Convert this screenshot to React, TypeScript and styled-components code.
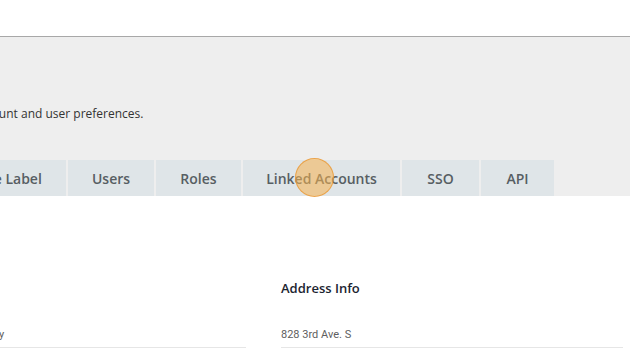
import styled, { createGlobalStyle } from "styled-components";

const GlobalStyle = createGlobalStyle`
  html, body {
    margin: 0;
    padding: 0;
    background: #ffffff;
    overflow: hidden;
  }
  body {
    font-family: "Open Sans", "DejaVu Sans", sans-serif;
    color: #333;
  }
`;

const TopBar = styled.div`
  height: 36px;
  background: #ffffff;
  border-bottom: 1px solid #a8a8a8;
`;

const Header = styled.header`
  background: #eeeeee;
  padding-top: 68px;
`;

const Inner = styled.div`
  margin-left: -96px;
`;

const Description = styled.p`
  margin: 0 0 0 -7px;
  font-size: 12px;
  line-height: 18px;
  color: #333;
`;

const TabList = styled.nav`
  display: flex;
  gap: 2px;
  margin-top: 37px;
  margin-left: 34px;
`;

const Tab = styled.div<{ $width: number }>`
  width: ${(p) => p.$width}px;
  height: 36px;
  display: flex;
  align-items: center;
  justify-content: center;
  flex-shrink: 0;
  background: #dfe5e8;
  color: #575e63;
  font-size: 14px;
  font-weight: 600;
  white-space: nowrap;
`;

const ClickMark = styled.span`
  position: absolute;
  left: 295px;
  top: 158px;
  width: 37px;
  height: 37px;
  border-radius: 50%;
  background: rgba(246, 178, 80, 0.55);
  border: 1px solid rgba(232, 150, 50, 0.75);
  pointer-events: none;
`;

const Columns = styled.section`
  display: grid;
  grid-template-columns: 342px 342px;
  column-gap: 35px;
  padding-top: 82px;
`;

const Column = styled.div`
  display: flex;
  flex-direction: column;
`;

const ColumnTitle = styled.h3`
  margin: 0;
  height: 20px;
  font-size: 13px;
  line-height: 20px;
  font-weight: 600;
  color: #1b2430;
`;

const FieldValue = styled.div`
  margin-top: 30px;
  padding-bottom: 5px;
  border-bottom: 1px solid #e6e6e6;
  font-family: Roboto, "Liberation Sans", sans-serif;
  font-size: 11px;
  line-height: 14px;
  color: #5e5e5e;
  white-space: nowrap;
`;

const tabs = [
  { label: "White Label", width: 128 },
  { label: "Users", width: 86 },
  { label: "Roles", width: 85 },
  { label: "Linked Accounts", width: 157 },
  { label: "SSO", width: 77 },
  { label: "API", width: 73 },
];

export default function App() {
  return (
    <>
      <GlobalStyle />
      <TopBar />
      <Header>
        <Inner>
          <Description>Manage your account and user preferences.</Description>
          <TabList>
            {tabs.map((t) => (
              <Tab key={t.label} $width={t.width}>
                {t.label}
              </Tab>
            ))}
          </TabList>
        </Inner>
      </Header>
      <Inner>
        <Columns>
          <Column>
            <ColumnTitle>Company</ColumnTitle>
            <FieldValue>Northwind Company</FieldValue>
          </Column>
          <Column>
            <ColumnTitle>Address Info</ColumnTitle>
            <FieldValue>828 3rd Ave. S</FieldValue>
          </Column>
        </Columns>
      </Inner>
      <ClickMark />
    </>
  );
}
